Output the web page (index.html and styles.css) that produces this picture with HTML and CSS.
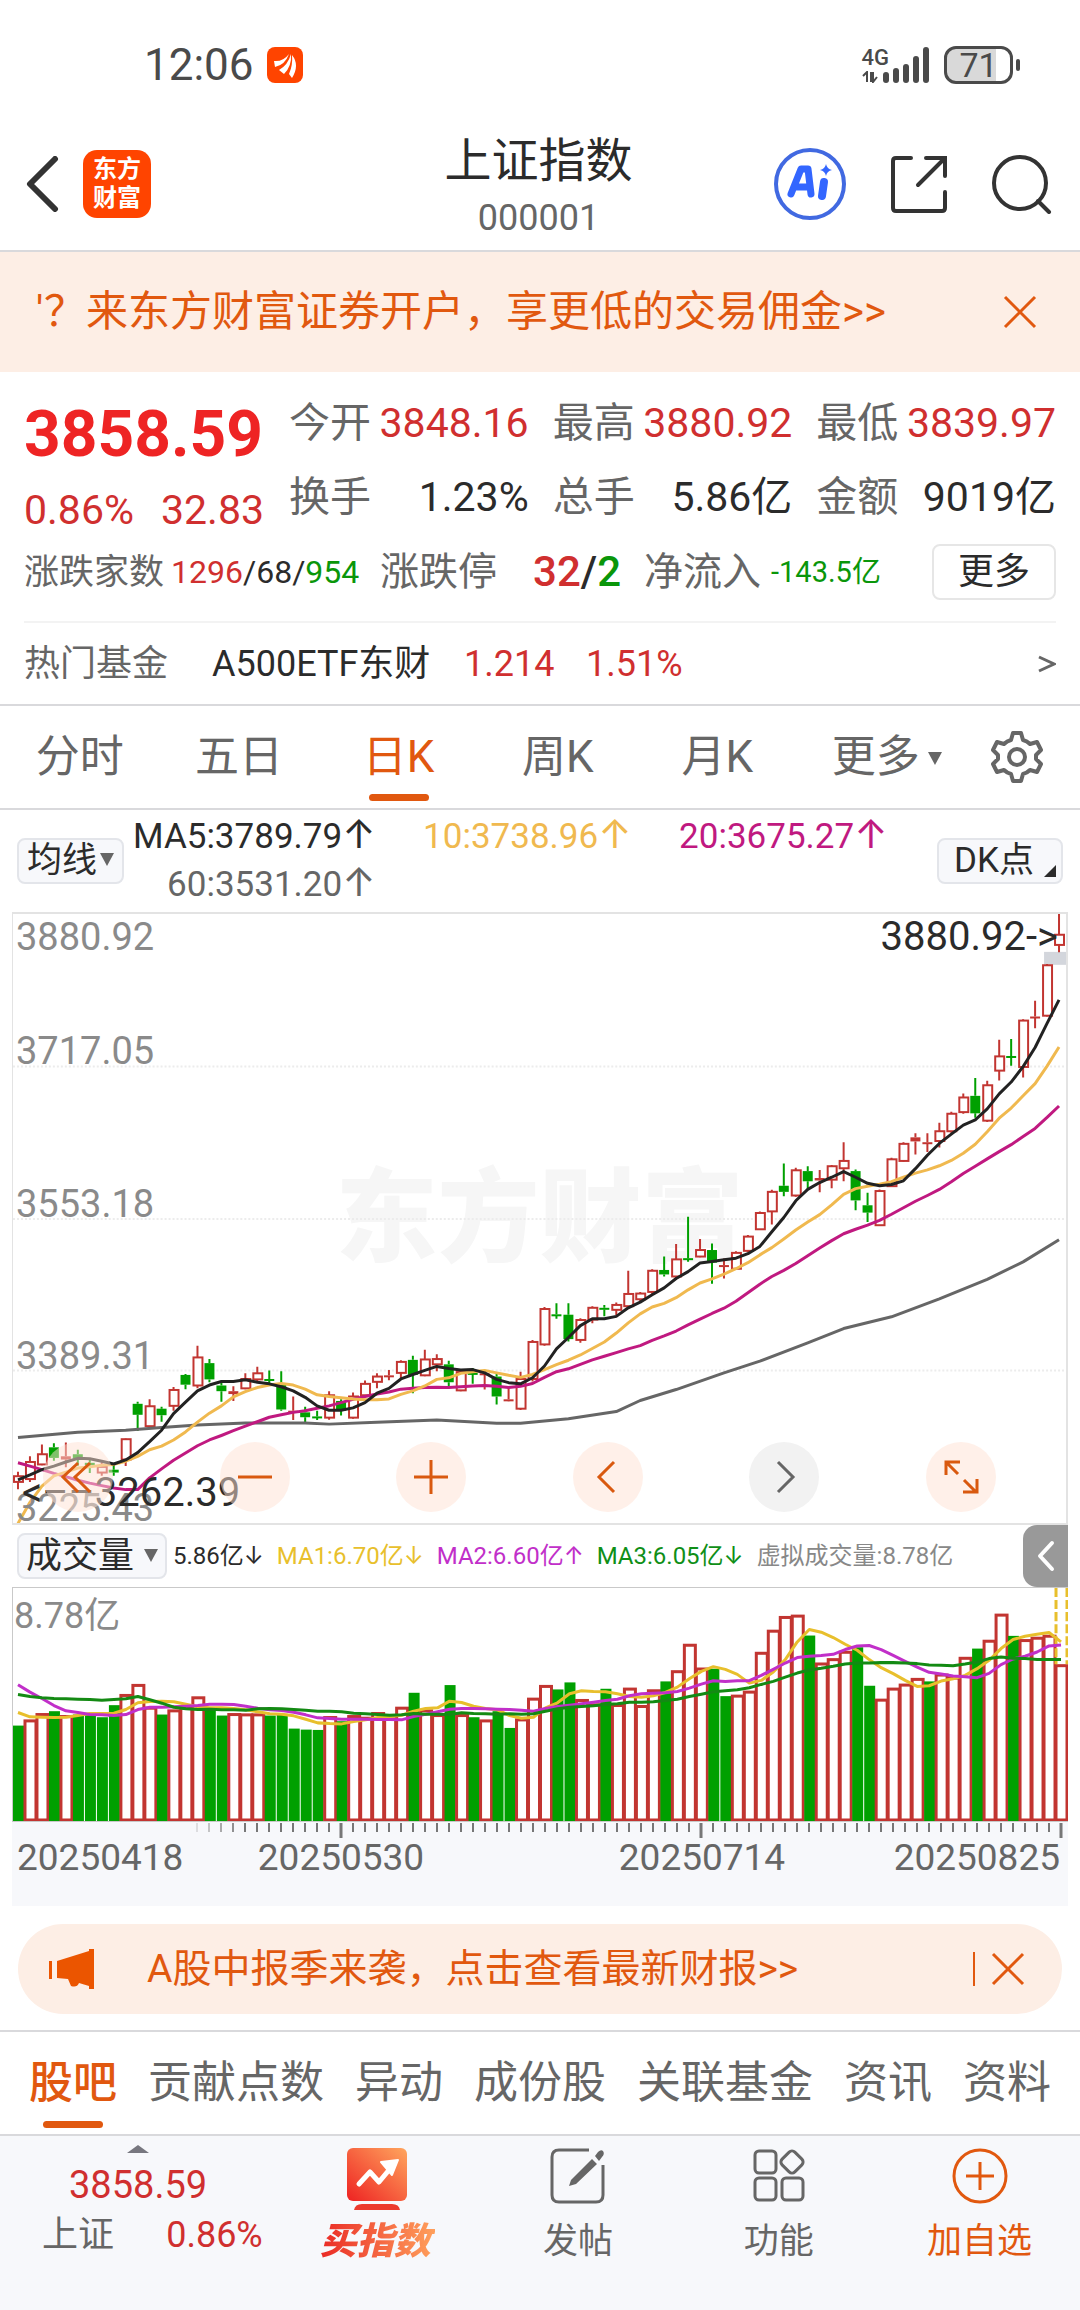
FILE: index.html
```html
<!DOCTYPE html>
<html lang="zh-CN">
<head>
    <meta charset="utf-8">
    <meta name="viewport" content="width=device-width, initial-scale=1">
    <title>上证指数 000001</title>
    <link rel="stylesheet" href="styles.css">
</head>
<body>
    <div class="status-bar">
        <span class="clock">12:06</span>
        <svg class="status-app" viewBox="0 0 36 36">
            <rect width="36" height="36" rx="8" fill="#ff4400"/>
            <path d="M7 14 Q16 15 22 7 Q18 18 8 20 Z M12 23 Q21 18 24 7 Q25 19 17 27 Z M22 27 Q26 18 25 8 Q33 18 25 31 Z" fill="#fff"/>
        </svg>
        <div class="network">
            <span>4G</span>
            <svg viewBox="0 0 16 12">
                <path d="M1 5 L5 1 V11 M9 1 V11 M11 1 V11 L15 6" fill="none" stroke="#4a4a4a" stroke-width="2"/>
            </svg>
        </div>
        <svg class="signal" viewBox="0 0 46 36">
            <g stroke="#4a4a4a" stroke-width="6" stroke-linecap="round">
                <path d="M3 28 V33"/><path d="M13 24 V33"/><path d="M23 20 V33"/><path d="M33 12 V33"/><path d="M43 3 V33"/>
            </g>
        </svg>
        <div class="battery"><span>71</span></div>
    </div>

    <header class="header">
        <div class="header-side">
            <button class="icon-button" aria-label="返回">
                <svg width="34" height="56" viewBox="0 0 34 56"><path d="M30 3 L5 28 L30 53" fill="none" stroke="#333" stroke-width="6" stroke-linecap="round" stroke-linejoin="round"/></svg>
            </button>
            <a class="brand" href="#">东方<br>财富</a>
        </div>
        <div class="header-title">
            <h1>上证指数</h1>
            <p>000001</p>
        </div>
        <div class="header-side header-tools">
            <button class="ai-button" aria-label="AI助手">
                <svg width="72" height="72" viewBox="0 0 72 72">
                    <circle cx="36" cy="36" r="34" fill="#fff" stroke="#4169e1" stroke-width="4"/>
                    <path d="M52 16 Q53 21 58 22 Q53 23 52 28 Q51 23 46 22 Q51 21 52 16 Z" fill="#3366ff"/>
                    <path d="M17 46 L27 21 H34 L37 46 M23 39 H35" fill="none" stroke="#3366ff" stroke-width="7" stroke-linejoin="round" stroke-linecap="round"/>
                    <path d="M50 34 L48 48" fill="none" stroke="#3366ff" stroke-width="8" stroke-linecap="round"/>
                </svg>
            </button>
            <button class="icon-button" aria-label="分享">
                <svg width="60" height="60" viewBox="0 0 60 60"><path d="M22 4 H7 Q4 4 4 7 V54 Q4 57 7 57 H53 Q56 57 56 54 V38 M37 4 H56 V22 M55 5 L29 31" fill="none" stroke="#333" stroke-width="4" stroke-linecap="round"/></svg>
            </button>
            <button class="icon-button" aria-label="搜索">
                <svg width="60" height="60" viewBox="0 0 60 60"><circle cx="28" cy="29" r="26" fill="none" stroke="#333" stroke-width="4"/><path d="M46 47 L57 58" stroke="#333" stroke-width="4" stroke-linecap="round"/></svg>
            </button>
        </div>
    </header>

    <div class="banner">
        <a href="#"><span class="clipped">'</span>？来东方财富证券开户，享更低的交易佣金&gt;&gt;</a>
        <button class="icon-button" aria-label="关闭">
            <svg width="34" height="34" viewBox="0 0 34 34"><path d="M2 2 L32 32 M32 2 L2 32" stroke="#e1580f" stroke-width="3"/></svg>
        </button>
    </div>

    <section class="quote">
        <div class="quote-top">
            <div class="quote-price">
                <strong>3858.59</strong>
                <div><span>0.86%</span><span>32.83</span></div>
            </div>
            <dl class="quote-grid">
                <div><dt>今开</dt><dd class="up">3848.16</dd></div>
                <div><dt>最高</dt><dd class="up">3880.92</dd></div>
                <div><dt>最低</dt><dd class="up">3839.97</dd></div>
                <div><dt>换手</dt><dd>1.23%</dd></div>
                <div><dt>总手</dt><dd>5.86亿</dd></div>
                <div><dt>金额</dt><dd>9019亿</dd></div>
            </dl>
        </div>
        <div class="quote-breadth">
            <span class="name small">涨跌家数</span>
            <span class="counts"><span class="up">1296</span>/68/<span class="down">954</span></span>
            <span class="name">涨跌停</span>
            <span class="limits"><span class="up">32</span>/<span class="down">2</span></span>
            <span class="name">净流入</span>
            <span class="flow down">-143.5亿</span>
            <button class="more-button">更多</button>
        </div>
        <a class="hot-fund" href="#">
            <span class="hot-label">热门基金</span>
            <span class="hot-name">A500ETF东财</span>
            <span class="up">1.214</span>
            <span class="up">1.51%</span>
            <svg width="18" height="20" viewBox="0 0 18 20"><path d="M1 3 L16 10 L1 17" fill="none" stroke="#666" stroke-width="3"/></svg>
        </a>
    </section>

    <nav class="period-tabs">
        <a href="#">分时</a>
        <a href="#">五日</a>
        <a href="#" class="active">日K</a>
        <a href="#">周K</a>
        <a href="#">月K</a>
        <a href="#">更多<i class="caret"></i></a>
        <button class="icon-button" aria-label="设置">
            <svg width="54" height="54" viewBox="0 0 54 54" fill="none" stroke="#666" stroke-width="4" stroke-linejoin="round">
                <path d="M23 3 H31 L33 10 Q37 11 40 14 L47 12 L51 20 L46 25 V29 L51 34 L47 42 L40 40 Q37 43 33 44 L31 51 H23 L21 44 Q17 43 14 40 L7 42 L3 34 L8 29 V25 L3 20 L7 12 L14 14 Q17 11 21 10 Z"/>
                <circle cx="27" cy="27" r="8"/>
            </svg>
        </button>
    </nav>

    <div class="ma-bar">
        <button class="chip">均线<i class="caret"></i></button>
        <div class="ma-values">
            <span class="ma5">MA5:3789.79<b>↑</b></span>
            <span class="ma10">10:3738.96<b>↑</b></span>
            <span class="ma20">20:3675.27<b>↑</b></span>
            <span class="ma60">60:3531.20<b>↑</b></span>
        </div>
        <button class="chip dk">DK点<i class="corner"></i></button>
    </div>

    <div class="chart-area">
        <div class="kline">
            <div class="watermark">东方财富</div>
            <svg id="kline" viewBox="0 0 1056 611" preserveAspectRatio="none"></svg>
            <div class="scale">
                <div><span>3880.92</span><span>3717.05</span></div>
                <div><span>3553.18</span></div>
                <div><span>3389.31</span></div>
                <div><span>3225.43</span></div>
            </div>
            <div class="mark mark-high">3880.92-&gt;</div>
            <div class="mark mark-low">&lt;––3262.39</div>
            <div class="chart-tools">
                <button aria-label="最早"><svg viewBox="0 0 70 70"><path d="M35 21 L20 35 L35 50 M47 21 L32 35 L47 50"/></svg></button>
                <button aria-label="缩小"><svg viewBox="0 0 70 70"><path d="M18 35 H52"/></svg></button>
                <button aria-label="放大"><svg viewBox="0 0 70 70"><path d="M18 35 H52 M35 18 V52"/></svg></button>
                <button aria-label="左移"><svg viewBox="0 0 70 70"><path d="M41 20 L26 35 L41 50"/></svg></button>
                <button aria-label="右移" class="disabled"><svg viewBox="0 0 70 70"><path d="M29 20 L44 35 L29 50"/></svg></button>
                <button aria-label="全屏"><svg viewBox="0 0 70 70"><path d="M34 20 H20 V33 M20 20 L32 32 M51 37 V50 H37 M38 38 L50 50"/></svg></button>
            </div>
        </div>

        <div class="volume-bar">
            <button class="chip">成交量<i class="caret"></i></button>
            <span>5.86亿<b>↓</b></span>
            <span class="v1">MA1:6.70亿<b>↓</b></span>
            <span class="v2">MA2:6.60亿<b>↑</b></span>
            <span class="v3">MA3:6.05亿<b>↓</b></span>
            <span class="virtual">虚拟成交量:8.78亿</span>
            <button class="collapse" aria-label="展开">
                <svg width="20" height="32" viewBox="0 0 20 32"><path d="M16 3 L4 16 L16 29" fill="none" stroke="#fff" stroke-width="4" stroke-linecap="round" stroke-linejoin="round"/></svg>
            </button>
        </div>

        <div class="volume">
            <span class="volume-max">8.78亿</span>
            <svg id="volume" viewBox="0 0 1056 232" preserveAspectRatio="none"></svg>
        </div>

        <div class="axis">
            <svg id="ticks" viewBox="0 0 1056 16" preserveAspectRatio="none"></svg>
            <div class="dates">
                <span>20250418</span>
                <span>20250530</span>
                <span>20250714</span>
                <span>20250825</span>
            </div>
        </div>
    </div>

    <div class="notice">
        <svg width="48" height="42" viewBox="0 0 48 42"><path d="M1 13 H4 V31 H1 Z M9 13 L41 3 V1 H46 V41 H41 V38 L31 35 Q29 40 23 38 L20 31 L9 30 Z" fill="#eb5500"/></svg>
        <a href="#">A股中报季来袭，点击查看最新财报&gt;&gt;</a>
        <button class="icon-button" aria-label="关闭">
            <svg width="34" height="34" viewBox="0 0 34 34"><path d="M2 2 L32 32 M32 2 L2 32" stroke="#e1580f" stroke-width="3"/></svg>
        </button>
    </div>

    <nav class="section-tabs">
        <a href="#" class="active">股吧</a>
        <a href="#">贡献点数</a>
        <a href="#">异动</a>
        <a href="#">成份股</a>
        <a href="#">关联基金</a>
        <a href="#">资讯</a>
        <a href="#">资料</a>
    </nav>

    <footer class="bottom-bar">
        <a class="bottom-index" href="#">
            <i class="caret-up"></i>
            <span class="bottom-price">3858.59</span>
            <span class="bottom-row"><span>上证</span><span class="up">0.86%</span></span>
        </a>
        <button class="bottom-item buy">
            <svg width="60" height="64" viewBox="0 0 60 64">
                <defs><linearGradient id="hot" x1="0" y1="1" x2="1" y2="0"><stop offset="0" stop-color="#ee2222"/><stop offset="1" stop-color="#ffa65e"/></linearGradient></defs>
                <rect width="60" height="53" rx="6" fill="url(#hot)"/>
                <path d="M7 62 Q8 56 15 56 H45 Q52 56 53 62 Z" fill="#ec3a2d"/>
                <path d="M12 36 L23 24 L32 34 L42 22" fill="none" stroke="#fff" stroke-width="5" stroke-linecap="round" stroke-linejoin="round"/>
                <path d="M34 14 L51 12 L45 27 Z" fill="#fff" stroke="#fff" stroke-width="2" stroke-linejoin="round"/>
            </svg>
            <span>买指数</span>
        </button>
        <button class="bottom-item">
            <svg width="60" height="64" viewBox="0 0 60 64">
                <path d="M41 2 H11 Q4 2 4 9 V47 Q4 54 11 54 H48 Q55 54 55 47 V17" fill="none" stroke="#666" stroke-width="3"/>
                <path d="M44 11 L49 16 L28 36 L21 38 L23 32 Z M47 8 L50 4 Q53 1 55 3 Q57 6 54 9 L51 13 Z" fill="#666"/>
            </svg>
            <span>发帖</span>
        </button>
        <button class="bottom-item">
            <svg width="60" height="64" viewBox="0 0 60 64" fill="none" stroke="#666" stroke-width="3">
                <rect x="6" y="3" width="21" height="22" rx="4"/>
                <rect x="6" y="30" width="21" height="22" rx="4"/>
                <rect x="33" y="30" width="21" height="22" rx="4"/>
                <rect x="34" y="5" width="18" height="18" rx="4" transform="rotate(45 43 14)"/>
            </svg>
            <span>功能</span>
        </button>
        <button class="bottom-item add">
            <svg width="60" height="64" viewBox="0 0 60 64" fill="none" stroke="#e1580f" stroke-width="3">
                <circle cx="30" cy="28" r="26"/><path d="M16 28 H44 M30 14 V42"/>
            </svg>
            <span>加自选</span>
        </button>
    </footer>

    <script src="chart.js"></script>
</body>
</html>
```
FILE: styles.css
```css
* {
    box-sizing: border-box;
}
body {
    margin: 0;
    background: #fff;
    color: #2b2b2b;
    font-family: Roboto, "Noto Sans CJK SC", sans-serif;
    font-size: 36px;
    line-height: 1;
}
a {
    color: inherit;
    text-decoration: none;
}
button {
    padding: 0;
    border: none;
    background: none;
    color: inherit;
    font: inherit;
    cursor: pointer;
}
svg {
    display: block;
}
.icon-button {
    display: flex;
}
.up {
    color: #d02f2f;
}
.down {
    color: #0a960a;
}
.caret {
    display: inline-block;
    border: 7px solid transparent;
    border-top: 13px solid #666;
    border-bottom: none;
}

/* status bar */
.status-bar {
    display: flex;
    align-items: center;
    height: 128px;
    padding: 2px 67px 0 144px;
    color: #4a4a4a;
}
.clock {
    font-size: 44px;
}
.status-app {
    width: 36px;
    height: 36px;
    margin-left: 13px;
}
.network {
    margin-right: -6px;
    margin-left: auto;
    font-size: 22px;
    font-weight: 500;
}
.network svg {
    width: 16px;
    height: 12px;
    margin-top: 2px;
}
.signal {
    width: 46px;
    height: 36px;
    margin-right: 15px;
}
.battery {
    position: relative;
    width: 69px;
    height: 38px;
    border: 3px solid #4a4a4a;
    border-radius: 12px;
    background: linear-gradient(to right, #d9d9d9 78%, #fff 78%);
    font-size: 34px;
    line-height: 33px;
    text-align: center;
}
.battery::after {
    content: "";
    position: absolute;
    right: -10px;
    top: 10px;
    width: 4px;
    height: 12px;
    border-radius: 2px;
    background: #4a4a4a;
}

/* header */
.header {
    display: flex;
    align-items: center;
    height: 124px;
    padding: 0 28px 0 25px;
    border-bottom: 2px solid #d9d9dc;
}
.header-side {
    display: flex;
    flex: 1;
    align-items: center;
    padding-bottom: 10px;
}
.header-tools {
    justify-content: flex-end;
    gap: 43px;
}
.brand {
    width: 68px;
    height: 68px;
    margin-left: 24px;
    padding-top: 5px;
    border-radius: 14px;
    background: #ff4400;
    color: #fff;
    font-size: 24px;
    font-weight: 700;
    line-height: 29px;
    text-align: center;
}
.header-title {
    padding-bottom: 4px;
    text-align: center;
}
.header-title h1 {
    margin: 0;
    font-size: 47px;
    font-weight: 400;
    line-height: 60px;
}
.header-title p {
    margin: 5px 0 4px;
    color: #666;
    font-size: 36px;
    line-height: 44px;
}

/* open account banner */
.banner {
    display: flex;
    align-items: center;
    justify-content: space-between;
    height: 120px;
    padding: 0 43px 0 36px;
    background: #fdeee5;
    color: #e1580f;
    font-size: 42px;
}
.clipped {
    display: inline-block;
    width: 8px;
}

/* quote */
.quote {
    padding: 0 24px;
    border-bottom: 2px solid #d9d9dc;
}
.quote-top {
    display: flex;
    justify-content: space-between;
    padding-top: 14px;
}
.quote-price {
    width: 240px;
    color: #d02f2f;
}
.quote-price strong {
    display: block;
    padding-top: 14px;
    color: #ee2424;
    font-size: 64px;
    line-height: 70px;
}
.quote-price div {
    display: flex;
    justify-content: space-between;
    font-size: 41px;
    line-height: 80px;
}
.quote-grid {
    display: grid;
    grid-template-columns: repeat(3, 1fr);
    grid-auto-rows: 74px;
    column-gap: 24px;
    width: 767px;
    margin: 0;
    font-size: 41px;
}
.quote-grid div {
    display: flex;
    align-items: center;
    justify-content: space-between;
}
.quote-grid dt {
    color: #666;
}
.quote-grid dd {
    margin: 0;
}
.quote-breadth {
    display: flex;
    align-items: center;
    height: 84px;
    margin-top: -20px;
}
.name {
    color: #666;
    font-size: 39px;
}
.small {
    font-size: 35px;
}
.counts {
    width: 216px;
    padding-left: 7px;
    font-size: 32px;
}
.limits {
    width: 147px;
    padding-left: 36px;
    font-size: 42px;
    font-weight: 500;
}
.flow {
    padding-left: 10px;
    font-size: 29px;
}
.more-button {
    width: 124px;
    height: 56px;
    margin-left: auto;
    border: 2px solid #e6e6e6;
    border-radius: 8px;
    font-size: 36px;
}
.hot-fund {
    display: flex;
    align-items: center;
    height: 83px;
    margin-top: 7px;
    border-top: 2px solid #f3f3f3;
}
.hot-label {
    width: 188px;
    color: #666;
}
.hot-name {
    width: 252px;
}
.hot-fund .up {
    width: 122px;
}
.hot-fund svg {
    margin-left: auto;
}

/* period tabs */
.period-tabs {
    display: grid;
    grid-template-columns: repeat(5, 160fr) 180fr 100fr;
    align-items: center;
    height: 104px;
    padding-right: 4px;
    border-bottom: 2px solid #d9d9dc;
    color: #666;
    font-size: 44px;
    text-align: center;
}
.period-tabs a,
.section-tabs a {
    position: relative;
    line-height: 100px;
}
.period-tabs .icon-button {
    justify-content: center;
    padding-right: 18px;
}
.period-tabs .caret {
    margin-left: 8px;
    vertical-align: 7px;
}
.active {
    color: #e1580f;
}
.active::after {
    content: "";
    position: absolute;
    left: 50%;
    bottom: 6px;
    width: 60px;
    height: 7px;
    margin-left: -30px;
    border-radius: 4px;
    background: #e1580f;
}

/* moving average legend */
.ma-bar {
    display: flex;
    align-items: center;
    justify-content: space-between;
    height: 102px;
    padding: 0 17px;
}
.chip {
    position: relative;
    height: 46px;
    padding: 0 8px;
    border: 2px solid #e3e5ea;
    border-radius: 8px;
    background: #f7f8fb;
    font-size: 35px;
    line-height: 42px;
    white-space: nowrap;
}
.chip .caret {
    margin-left: 3px;
    vertical-align: 6px;
}
.dk {
    width: 126px;
    padding-right: 20px;
}
.corner {
    position: absolute;
    right: 5px;
    bottom: 5px;
    border-left: 12px solid transparent;
    border-bottom: 12px solid #2b2b2b;
}
.ma-values {
    display: grid;
    grid-template-columns: repeat(3, 256px);
    justify-items: end;
    width: 768px;
    margin-right: 42px;
    margin-left: -12px;
    font-size: 35px;
    line-height: 48px;
}
.ma-values b,
.volume-bar b {
    font-family: Inter, sans-serif;
    font-weight: 400;
    line-height: 0;
}
.ma-values b {
    font-size: 40px;
}
.ma10 {
    color: #f0b94f;
}
.ma20 {
    color: #c01980;
}
.ma60 {
    color: #666;
}

/* candles */
.chart-area {
    margin: 0 12px;
}
.kline {
    position: relative;
    height: 613px;
    border: 2px solid #e3e3e3;
    border-width: 2px 2px 2px 1px;
}
.kline > svg {
    position: relative;
    width: 100%;
    height: 100%;
}
.watermark {
    position: absolute;
    top: 50%;
    width: 100%;
    color: #f6f6f6;
    font-size: 102px;
    font-weight: 900;
    line-height: 102px;
    margin-top: -51px;
    text-align: center;
}
.scale {
    position: absolute;
    inset: 0;
    display: grid;
    grid-template-rows: repeat(4, 1fr);
    padding-left: 3px;
    color: #8a8a8a;
    font-size: 38px;
    line-height: 30px;
}
.scale div {
    display: flex;
    flex-direction: column;
    justify-content: space-between;
    padding-top: 8px;
}
.scale div:not(:first-child) {
    justify-content: flex-end;
}
.mark {
    position: absolute;
    font-size: 40px;
}
.mark-high {
    top: 3px;
    right: 8px;
}
.mark-low {
    bottom: 10px;
    left: 9px;
}
.chart-tools {
    position: absolute;
    right: 0;
    bottom: 11px;
    left: 0;
    display: flex;
    justify-content: space-between;
    padding: 0 70px 0 30px;
}
.chart-tools button {
    width: 70px;
    height: 70px;
    border-radius: 50%;
    background: rgba(255, 226, 211, 0.5);
}
.chart-tools path {
    fill: none;
    stroke: #d9590f;
    stroke-width: 3;
}
.chart-tools .disabled {
    background: #f2f2f2;
}
.chart-tools .disabled path {
    stroke: #666;
}
#kline path,
#volume path {
    fill: none;
    stroke-width: 2;
    stroke-linejoin: round;
}
#kline .average,
#volume .average {
    stroke-width: 3;
}

/* volume */
.volume-bar {
    display: flex;
    align-items: center;
    gap: 13px;
    height: 62px;
    padding-left: 5px;
    font-size: 24px;
    white-space: nowrap;
}
.volume-bar .chip {
    width: 150px;
    margin-right: -7px;
    padding: 0 4px;
    font-size: 36px;
}
.volume-bar .caret {
    margin-left: 10px;
}
.v1 {
    color: #e8bf2c;
}
.v2 {
    color: #c12fc9;
}
.v3 {
    color: #0f8f17;
}
.virtual {
    color: #888;
}
.collapse {
    display: flex;
    align-items: center;
    justify-content: center;
    width: 45px;
    height: 62px;
    margin-left: auto;
    border-radius: 14px 0 0 14px;
    background: #999;
}
.volume {
    position: relative;
    height: 235px;
    border: 1px solid #c9c9c9;
    border-right: none;
}
.volume svg {
    width: 100%;
    height: 100%;
}
.volume-max {
    position: absolute;
    top: 10px;
    left: 1px;
    color: #8a8a8a;
    font-size: 36px;
}
.axis {
    height: 84px;
    background: #f7f8fb;
}
.axis svg {
    width: 100%;
    height: 16px;
}
/* columns keep each date under its major tick */
.dates {
    display: grid;
    grid-template-columns: minmax(0, 208fr) minmax(0, 242fr) minmax(0, 480fr) minmax(0, 118fr) minmax(0, 8fr);
    justify-items: center;
    color: #666;
    font-size: 37px;
    line-height: 40px;
}
.dates span:first-child {
    justify-self: start;
    padding-left: 5px;
}
.dates span:last-child {
    justify-self: end;
}

/* notice */
.notice {
    display: flex;
    align-items: center;
    height: 90px;
    margin: 18px 18px 16px;
    padding: 0 37px 0 30px;
    border-radius: 45px;
    background: #fdeee5;
    color: #e1580f;
    font-size: 39px;
}
.notice a {
    flex: 1;
    margin-left: 51px;
}
.notice .icon-button {
    padding-left: 16px;
    border-left: 2px solid #e1580f;
}

/* section tabs */
.section-tabs {
    display: flex;
    justify-content: space-between;
    padding: 1px 29px 0;
    border: solid #d9d9dc;
    border-width: 2px 0;
    color: #666;
    font-size: 44px;
}
.section-tabs .active {
    font-weight: 500;
}
.section-tabs a {
    line-height: 101px;
}

/* bottom bar */
.bottom-bar {
    display: grid;
    grid-template-columns: 277fr repeat(4, 201fr);
    min-height: 175px;
    background: #f7f8fb;
    color: #666;
}
.bottom-index {
    padding: 9px 14px 0 42px;
}
.caret-up {
    display: block;
    width: 22px;
    margin-left: 85px;
    border: 11px solid transparent;
    border-top: none;
    border-bottom: 8px solid #77777f;
}
.bottom-price {
    display: block;
    padding: 12px 0 0 27px;
    color: #d02f2f;
    font-size: 38px;
    line-height: 40px;
}
.bottom-row {
    display: flex;
    justify-content: space-between;
    margin-top: 10px;
    line-height: 40px;
}
.bottom-item {
    display: flex;
    flex-direction: column;
    align-items: center;
    gap: 10px;
    padding-top: 12px;
    font-size: 35px;
    line-height: 40px;
}
.buy span {
    padding-right: 4px;
    background: linear-gradient(to right, #ea2a25, #ffa05c);
    background-clip: text;
    color: transparent;
    font-size: 37px;
    font-style: italic;
    font-weight: 900;
}
.add {
    color: #e1580f;
}
```
FILE: chart.js
```js
// 日K: [涨跌, 最高, 实体上沿, 实体下沿, 最低], 值为价格轴深度 29(顶) ~ 1526(底)
const candles = [
    ['r', 1400, 1411, 1425, 1443], ['r', 1362, 1376, 1418, 1425], ['r', 1333, 1357, 1382, 1384], ['g', 1330, 1340, 1366, 1373],
    ['r', 1328, 1362, 1370, 1389], ['g', 1346, 1357, 1368, 1385], ['g', 1370, 1378, 1384, 1403], ['r', 1373, 1388, 1402, 1410],
    ['g', 1380, 1395, 1402, 1410], ['r', 1318, 1320, 1370, 1386], ['g', 1228, 1233, 1260, 1300], ['r', 1222, 1239, 1288, 1290],
    ['g', 1240, 1245, 1261, 1277], ['r', 1192, 1199, 1238, 1250], ['g', 1160, 1162, 1186, 1197], ['r', 1090, 1119, 1188, 1195],
    ['g', 1123, 1133, 1173, 1180], ['g', 1180, 1188, 1202, 1228], ['r', 1190, 1202, 1209, 1226], ['r', 1158, 1172, 1195, 1197],
    ['r', 1142, 1158, 1173, 1182], ['g', 1151, 1172, 1174, 1185], ['g', 1153, 1186, 1247, 1250], ['r', 1215, 1250, 1253, 1273],
    ['g', 1240, 1254, 1266, 1278], ['g', 1250, 1264, 1267, 1273], ['r', 1202, 1212, 1267, 1272], ['g', 1222, 1226, 1250, 1262],
    ['r', 1205, 1215, 1267, 1270], ['r', 1176, 1184, 1212, 1215], ['r', 1158, 1166, 1179, 1195], ['r', 1150, 1163, 1166, 1175],
    ['r', 1126, 1130, 1157, 1170], ['g', 1115, 1125, 1162, 1207], ['r', 1100, 1124, 1163, 1165], ['r', 1111, 1123, 1136, 1153],
    ['g', 1127, 1136, 1180, 1195], ['r', 1150, 1155, 1200, 1202], ['g', 1145, 1157, 1160, 1184], ['r', 1150, 1158, 1162, 1198],
    ['g', 1160, 1166, 1215, 1235], ['r', 1195, 1222, 1225, 1227], ['r', 1154, 1172, 1245, 1248], ['r', 1076, 1081, 1172, 1178],
    ['r', 995, 1000, 1087, 1090], ['g', 986, 1013, 1017, 1024], ['g', 986, 1014, 1074, 1080], ['r', 1023, 1027, 1076, 1083],
    ['r', 993, 997, 1026, 1035], ['g', 990, 997, 1001, 1018], ['r', 984, 990, 1002, 1015], ['r', 906, 963, 993, 1000],
    ['r', 958, 962, 976, 980], ['r', 902, 906, 958, 965], ['g', 871, 904, 915, 920], ['r', 840, 878, 920, 924],
    ['g', 773, 875, 877, 884], ['r', 828, 855, 871, 873], ['g', 839, 855, 886, 938], ['r', 876, 892, 895, 925],
    ['r', 858, 862, 901, 903], ['r', 818, 822, 857, 860], ['r', 760, 764, 804, 806], ['r', 707, 712, 760, 792],
    ['g', 642, 697, 712, 723], ['r', 653, 659, 721, 724], ['g', 649, 661, 686, 705], ['r', 658, 678, 684, 713],
    ['r', 646, 649, 682, 703], ['r', 590, 636, 654, 686], ['g', 657, 661, 733, 757], ['g', 714, 745, 763, 786],
    ['r', 706, 710, 794, 796], ['r', 628, 632, 698, 700], ['r', 590, 594, 636, 638], ['r', 568, 578, 588, 620],
    ['r', 568, 590, 593, 614], ['r', 542, 563, 587, 603], ['r', 515, 520, 563, 567], ['r', 470, 480, 516, 520],
    ['g', 432, 476, 519, 530], ['r', 439, 450, 537, 540], ['r', 338, 379, 414, 438], ['g', 336, 378, 380, 402],
    ['r', 288, 291, 405, 431], ['r', 242, 281, 284, 310], ['r', 152, 155, 279, 281], ['r', 29, 80, 105, 123]
];

const ma5 = [
    1420, 1408, 1395, 1386, 1376, 1367, 1368, 1374, 1381, 1371, 1353, 1326, 1298, 1257, 1229, 1201, 1187, 1178, 1178, 1174,
    1180, 1184, 1191, 1201, 1217, 1238, 1249, 1249, 1243, 1230, 1207, 1195, 1172, 1161, 1151, 1141, 1146, 1150, 1149, 1157,
    1173, 1181, 1184, 1169, 1140, 1098, 1070, 1041, 1024, 1024, 1018, 997, 983, 965, 948, 925, 908, 887, 883, 879,
    875, 864, 846, 810, 775, 734, 706, 689, 676, 662, 676, 691, 697, 694, 685, 655, 622, 593, 570, 548,
    535, 508, 471, 442, 404, 357, 298, 240
];
const ma10 = [
    1527, 1475, 1435, 1410, 1401, 1391, 1388, 1384, 1382, 1374, 1362, 1346, 1337, 1322, 1302, 1278, 1256, 1238, 1216, 1203,
    1193, 1187, 1183, 1187, 1197, 1211, 1215, 1218, 1221, 1223, 1223, 1221, 1210, 1201, 1189, 1173, 1169, 1158, 1154, 1151,
    1157, 1163, 1168, 1161, 1149, 1137, 1126, 1113, 1097, 1081, 1059, 1034, 1012, 995, 986, 972, 953, 936, 926, 914,
    901, 886, 867, 849, 828, 806, 786, 768, 744, 718, 704, 698, 693, 687, 676, 666, 658, 648, 635, 617,
    595, 564, 531, 506, 476, 446, 403, 356
];
const ma20 = [
    1378, 1386, 1395, 1404, 1412, 1421, 1428, 1434, 1440, 1444, 1444, 1415, 1393, 1372, 1354, 1336, 1322, 1311, 1299, 1288,
    1277, 1266, 1260, 1254, 1250, 1244, 1238, 1230, 1222, 1215, 1209, 1204, 1197, 1195, 1193, 1192, 1193, 1191, 1189, 1188,
    1190, 1193, 1190, 1183, 1168, 1154, 1147, 1136, 1125, 1116, 1107, 1098, 1090, 1077, 1066, 1054, 1039, 1025, 1011, 998,
    981, 960, 939, 920, 905, 888, 869, 850, 832, 815, 804, 794, 782, 767, 751, 735, 721, 706, 687, 667,
    649, 631, 613, 596, 576, 556, 529, 501
];
// 60日线只存拐点 [序号, 值]
const ma60 = [
    [0, 1316], [5, 1303], [9, 1298], [12, 1291], [15, 1285], [19, 1280], [24, 1280], [26, 1283], [30, 1278], [35, 1273],
    [40, 1281], [42, 1281], [46, 1270], [50, 1252], [52, 1225], [55, 1198], [59, 1157], [62, 1128], [66, 1083], [69, 1048],
    [73, 1019], [77, 975], [81, 927], [84, 884], [87, 830]
];

// 成交量柱顶, 264(顶) ~ 960(底)
const volumes = [
    675, 658, 639, 632, 645, 642, 638, 650, 614, 582, 552, 620, 642, 628, 620, 589, 622, 645, 639, 640,
    640, 645, 640, 684, 687, 688, 648, 662, 645, 650, 636, 652, 620, 577, 628, 642, 554, 642, 650, 658,
    632, 682, 655, 593, 555, 567, 546, 597, 610, 565, 612, 563, 615, 568, 543, 511, 432, 503, 505, 587,
    584, 572, 456, 390, 349, 345, 406, 488, 475, 453, 441, 556, 596, 563, 551, 534, 543, 521, 530, 471,
    445, 420, 342, 407, 418, 411, 405, 493
];
const volumeColors = 'grrgrggggrrrgrrrggrrrgggggrgrrrrrgrrgrgrggrrrggrrgrrrrgrrrggrrrrrrgrrrggrrrrgrrrgrrgrrrr';
const vma1 = [
    636, 649, 650, 651, 650, 645, 639, 639, 638, 627, 607, 603, 602, 604, 611, 619, 622, 622, 624, 628,
    634, 640, 641, 646, 656, 667, 669, 670, 663, 658, 651, 648, 644, 632, 624, 622, 602, 606, 617, 624,
    628, 645, 653, 650, 622, 607, 580, 571, 573, 574, 580, 588, 590, 586, 576, 560, 535, 513, 499, 507,
    522, 548, 540, 515, 478, 425, 388, 396, 412, 432, 450, 478, 502, 520, 540, 558, 556, 542, 535, 525,
    505, 480, 445, 418, 408, 402, 397, 425
];
const vma2 = [
    553, 575, 594, 615, 631, 636, 642, 643, 645, 642, 627, 620, 620, 619, 617, 615, 611, 611, 612, 617,
    623, 628, 630, 635, 643, 652, 654, 656, 656, 656, 657, 657, 658, 648, 641, 634, 626, 624, 624, 625,
    626, 627, 629, 632, 624, 618, 614, 610, 605, 600, 596, 586, 580, 578, 577, 573, 563, 551, 541, 543,
    541, 541, 525, 507, 488, 472, 468, 466, 462, 448, 437, 436, 448, 465, 483, 500, 516, 521, 527, 529,
    532, 519, 493, 476, 468, 455, 437, 434
];
const vma3 = [
    582, 588, 592, 594, 595, 596, 597, 599, 597, 595, 588, 598, 608, 620, 625, 627, 626, 628, 628, 629,
    625, 624, 625, 627, 629, 632, 632, 634, 638, 640, 642, 644, 643, 639, 641, 641, 642, 637, 639, 640,
    641, 640, 641, 640, 632, 625, 620, 618, 616, 612, 610, 605, 605, 604, 600, 596, 588, 581, 574, 571,
    568, 562, 552, 543, 530, 518, 509, 504, 498, 491, 488, 488, 487, 487, 488, 490, 494, 495, 496, 491,
    485, 475, 470, 474, 475, 478, 478, 478
];

const RED = '#c23531';
const GREEN = '#00a000';

const x = i => 5 + i * 12;
const priceY = v => (v - 29) * 611 / 1497;
const volumeY = v => (v - 264) / 3;

function line(values, y, color) {
    const points = values.map((v, i) => Array.isArray(v) ? v : [i, v]);
    const d = points.map(([i, v], n) => (n ? 'L' : 'M') + x(i) + ' ' + y(v).toFixed(1)).join(' ');
    return `<path class="average" d="${d}" stroke="${color}"/>`;
}

function drawKline() {
    let out = '';
    for (let i = 1; i < 4; i++) {
        const y = Math.round(i * 611 / 4);
        out += `<path d="M0 ${y} H1056" stroke="#ececec" stroke-dasharray="2 2"/>`;
    }
    // 跳空缺口
    out += '<rect x="1034" y="38" width="22" height="13" fill="#d3d6dc"/>';
    candles.forEach(([type, high, top, bottom, low], i) => {
        const color = type === 'r' ? RED : GREEN;
        const t = priceY(top), b = priceY(bottom);
        const solid = type === 'g' || bottom - top < 11;
        out += `<path d="M${x(i)} ${priceY(high)} V${t} M${x(i)} ${b} V${priceY(low)}" stroke="${color}"/>`;
        if (solid) {
            out += `<rect x="${x(i) - 5}" y="${t}" width="10" height="${Math.max(b - t, 2)}" fill="${color}"/>`;
        } else {
            out += `<rect x="${x(i) - 4}" y="${t}" width="9" height="${b - t}" fill="#fff" stroke="${color}" stroke-width="2"/>`;
        }
    });
    out += line(ma60, priceY, '#666') + line(ma20, priceY, '#c01980') + line(ma10, priceY, '#f0b94f') + line(ma5, priceY, '#222');
    document.getElementById('kline').innerHTML = out;
}

function drawVolume() {
    let out = '';
    volumes.forEach((v, i) => {
        const y = volumeY(v);
        if (volumeColors[i] === 'g') {
            out += `<rect x="${x(i) - 5}" y="${y}" width="11" height="${232 - y}" fill="${GREEN}"/>`;
        } else {
            out += `<rect x="${x(i) - 5}" y="${y + 1}" width="11" height="${230 - y}" fill="#fff" stroke="${RED}" stroke-width="3"/>`;
        }
    });
    // 当日虚拟成交量
    out += '<path class="average" d="M1044 0 V76 M1055 0 V76" stroke="#e8bf2c" stroke-dasharray="9 3"/>';
    out += line(vma1, volumeY, '#e8bf2c') + line(vma2, volumeY, '#c12fc9') + line(vma3, volumeY, '#138a13');
    document.getElementById('volume').innerHTML = out;
}

function drawTicks() {
    let out = '';
    for (let i = 15; i < 88; i++) {
        const major = i === 27 || i === 57 || i === 87;
        const opacity = Math.min(1, (i - 14) / 5);
        out += `<path d="M${x(i)} 1 V${major ? 16 : 10}" stroke="#777" stroke-width="${major ? 3 : 2}" opacity="${opacity}"/>`;
    }
    document.getElementById('ticks').innerHTML = out;
}

drawKline();
drawVolume();
drawTicks();
```
